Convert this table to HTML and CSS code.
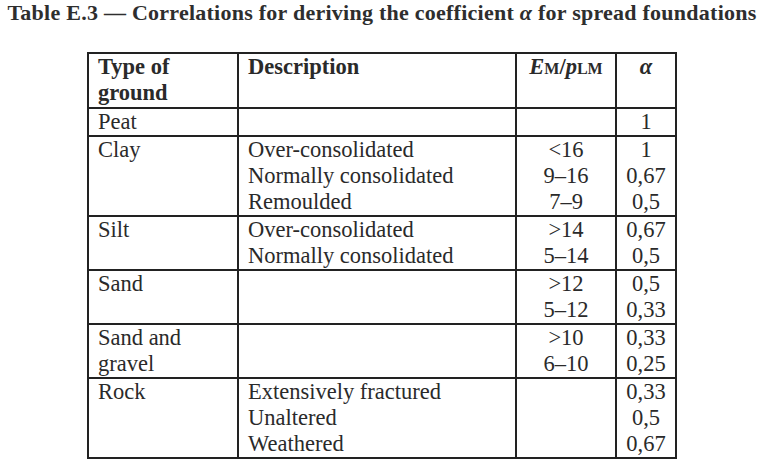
FILE: index.html
```html
<!DOCTYPE html>
<html lang="en">
<head>
<meta charset="utf-8">
<title>Table E.3</title>
<link rel="stylesheet" href="styles.css">
</head>
<body>
<div class="page">
  <h1 class="caption">Table E.3 — Correlations for deriving the coefficient <i class="sym">α</i> for spread foundations</h1>
  <table class="corr">
    <colgroup>
      <col class="c-type">
      <col class="c-desc">
      <col class="c-ratio">
      <col class="c-alpha">
    </colgroup>
    <thead>
      <tr>
        <th class="left">Type of<br>ground</th>
        <th class="left">Description</th>
        <th class="center"><i>E</i><span class="sub">M</span>/<i>p</i><span class="sub">LM</span></th>
        <th class="center"><i>α</i></th>
      </tr>
    </thead>
    <tbody>
      <tr>
        <td class="left">Peat</td>
        <td class="left"></td>
        <td class="center"></td>
        <td class="center">1</td>
      </tr>
      <tr>
        <td class="left">Clay</td>
        <td class="left">Over-consolidated<br>Normally consolidated<br>Remoulded</td>
        <td class="center">&lt;16<br>9–16<br>7–9</td>
        <td class="center">1<br>0,67<br>0,5</td>
      </tr>
      <tr>
        <td class="left">Silt</td>
        <td class="left">Over-consolidated<br>Normally consolidated</td>
        <td class="center">&gt;14<br>5–14</td>
        <td class="center">0,67<br>0,5</td>
      </tr>
      <tr>
        <td class="left">Sand</td>
        <td class="left"></td>
        <td class="center">&gt;12<br>5–12</td>
        <td class="center">0,5<br>0,33</td>
      </tr>
      <tr>
        <td class="left">Sand and<br>gravel</td>
        <td class="left"></td>
        <td class="center">&gt;10<br>6–10</td>
        <td class="center">0,33<br>0,25</td>
      </tr>
      <tr>
        <td class="left">Rock</td>
        <td class="left">Extensively fractured<br>Unaltered<br>Weathered</td>
        <td class="center"></td>
        <td class="center">0,33<br>0,5<br>0,67</td>
      </tr>
    </tbody>
  </table>
</div>
</body>
</html>
```

FILE: styles.css
```css
html, body {
  margin: 0;
  padding: 0;
  background: #ffffff;
}

.page {
  width: 764px;
  padding-top: 1px;
  font-family: "Liberation Serif", "Times New Roman", serif;
  color: #2a2a2a;
}

.caption {
  margin: 0;
  font-size: 22px;
  letter-spacing: 0.25px;
  line-height: 24px;
  font-weight: bold;
  text-align: center;
  white-space: nowrap;
  color: #2e2e2e;
}

.caption .sym {
  font-style: italic;
}

.corr {
  margin: 27px auto 0;
  width: 588px;
  border-collapse: collapse;
  table-layout: fixed;
  font-size: 22.5px;
  line-height: 26px;
}

.c-type { width: 150px; }
.c-desc { width: 278px; }
.c-ratio { width: 100px; }
.c-alpha { width: 60px; }

.corr th,
.corr td {
  border: 2px solid #222222;
  padding: 0 4px 0 9px;
  vertical-align: top;
}

.corr th {
  font-weight: bold;
  padding-bottom: 1px;
}

.corr .left { text-align: left; }
.corr .center { text-align: center; padding-left: 4px; }

.sub {
  font-size: 16px;
  font-style: normal;
}
```
